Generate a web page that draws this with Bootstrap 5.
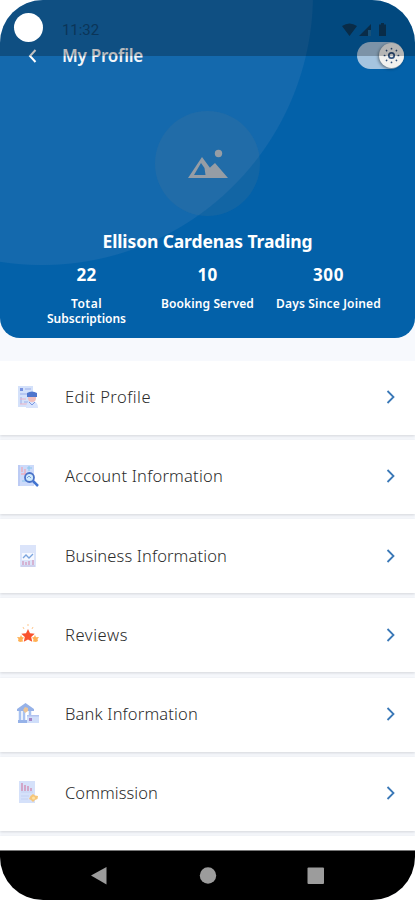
<!DOCTYPE html>
<html lang="en">
<head>
<meta charset="utf-8">
<meta name="viewport" content="width=device-width, initial-scale=1">
<title>My Profile</title>
<link href="https://cdn.jsdelivr.net/npm/bootstrap@5.3.0/dist/css/bootstrap.min.css" rel="stylesheet">
<style>
body{background:#fff;font-family:"Noto Sans","Open Sans",sans-serif;overflow:hidden}
.phone{width:415px;height:900px;border-radius:43px;background:#f7f9fd}
.hero{height:338px;border-radius:0 0 20px 20px;background:radial-gradient(circle at 42px -6px,#1469ad 270.5px,#0361a9 271.5px);color:#fff}
.topbar{height:76px;padding:35px 11px 0 27px}
.page-title{font-size:17px;font-weight:600;line-height:20px;margin-left:23px;color:#f3f6fa}
.toggle{width:47px;height:27px;border-radius:14px;background:#a5c4df}
.knob{width:25px;height:25px;background:#f1f1ef;box-shadow:-1px 1px 3px #0006}
.avatar{width:105px;height:105px;margin-top:35px;background:#8080801f}
.company{font-size:17.5px;font-weight:700;line-height:24px;margin-top:13px}
.stats{margin-top:10px;padding:0 26px}
.stat-num{font-size:17px;font-weight:700;line-height:24px}
.stat-label{font-size:12px;font-weight:600;line-height:15px;margin-top:9px}
.stat-label span{display:inline-block;height:15px;vertical-align:top}
.menu{margin-top:22.500px;gap:5.300px}
.menu-row{height:74px;padding:0 19px 1px 17px;box-shadow:0 1px 3px #3a3f4533;color:#2b2b2b}
.menu-row > svg:first-child{opacity:.88}
.menu-label{font-size:16.5px;font-weight:300;margin-left:26px;line-height:24px}
.softkeys{height:50px;border-top:1px solid #777}
.status{height:56px;background:#0000003f;pointer-events:none}
.camera{width:29px;height:29px;left:14px;top:13px}
.clock{font-family:Roboto,sans-serif;font-size:15px;line-height:18px;left:62px;top:21px;color:#0b3558}
.signals{left:341px;top:22px}
</style>
<script src="https://cdn.jsdelivr.net/npm/bootstrap@5.3.0/dist/js/bootstrap.bundle.min.js"></script>
</head>
<body>
<main class="phone position-relative overflow-hidden d-flex flex-column">
  <header class="hero flex-shrink-0 d-flex flex-column align-items-center">
    <div class="topbar w-100 d-flex align-items-center">
      <svg width="12" height="16" viewBox="0 0 12 16" fill="none" stroke="#fff" stroke-width="2"><path d="M8.500 2 3 8l5.500 6"/></svg>
      <h1 class="page-title mb-0"><span data-w="81">My Profile</span></h1>
      <div class="toggle ms-auto d-flex align-items-center justify-content-end">
        <div class="knob rounded-circle d-flex align-items-center justify-content-center">
          <svg width="19" height="19" viewBox="-9.5 -9.5 19 19" fill="none" stroke="#30507c" stroke-width="1.7" stroke-linecap="round"><circle r="2.7"/><path d="M0-7v.2M0 7v-.2M-7 0h.2M7 0h-.2M-5-5l.1.1M5-5l-.1.1M-5 5l.1-.1M5 5l-.1-.1"/></svg>
        </div>
      </div>
    </div>
    <div class="avatar rounded-circle d-flex align-items-center justify-content-center">
      <svg width="42" height="30" viewBox="0 0 42 30" fill="#969da5"><path fill-rule="evenodd" d="M1 29 15 8l8.500 11.500-.5-1L28 14l13 15ZM7 26h11.500l-1-7-3.500-5Z"/><circle cx="31.500" cy="4.500" r="3.700"/></svg>
    </div>
    <div class="company"><span data-w="210">Ellison Cardenas Trading</span></div>
    <div class="stats row g-0 w-100 text-center">
      <div class="col-4"><div class="stat-num"><span data-w="20">22</span></div><div class="stat-label"><span data-w="31">Total</span><br><span data-w="79">Subscriptions</span></div></div>
      <div class="col-4"><div class="stat-num"><span data-w="20">10</span></div><div class="stat-label text-nowrap"><span data-w="93">Booking Served</span></div></div>
      <div class="col-4"><div class="stat-num"><span data-w="31">300</span></div><div class="stat-label text-nowrap"><span data-w="105">Days Since Joined</span></div></div>
    </div>
  </header>

  <nav class="menu flex-grow-1 overflow-hidden d-flex flex-column">
    <a class="menu-row flex-shrink-0 bg-white d-flex align-items-center text-decoration-none" href="#">
      <svg width="22" height="24" viewBox="0 0 22 24" fill="none"><path fill="#cfddfa" d="M1 1h15v21H1z"/><path fill="#6482dc" d="M3 3h3v3H3z"/><path stroke="#8da4e7" d="M8 4h6M3 9h9M4 12v7M7 17h4"/><path stroke="#e9aabd" d="M3 14h6M3 19h7"/><path fill="#d3e0fc" d="M9 23c0-6 3-7 6-7s6 2 6 7z"/><circle cx="15" cy="13" r="4" fill="#efb7b6"/><path fill="#3764c6" d="M10 8q5-3 10 0v4H10z"/><path stroke="#688be0" d="m12 17 3 3 3-3"/></svg>
      <span class="menu-label"><span data-w="86">Edit Profile</span></span>
      <svg class="ms-auto" width="10" height="16" viewBox="0 0 10 16" fill="none" stroke="#3a78b7" stroke-width="1.800"><path d="m1.500 2 6 6-6 6"/></svg>
    </a>
    <a class="menu-row flex-shrink-0 bg-white d-flex align-items-center text-decoration-none" href="#">
      <svg width="22" height="24" viewBox="0 0 22 24"><path fill="#c5d5fa" d="M1 1h16v21H1z"/><path fill="#b3c4f3" d="M1 1h2v21H1z"/><path stroke="#e9a5b8" stroke-width="1.500" d="M5 3v5M8 5v6M4 10h5"/><path stroke="#79c0eb" d="M10 4h5M12 2v5M5 17h5"/><circle cx="12.500" cy="13.500" r="4.500" fill="#c9e6fb" stroke="#315fc1" stroke-width="1.800"/><path stroke="#2861ca" stroke-width="2.500" d="m16 17 5 5"/><path fill="none" stroke="#6490d6" d="m10 14 2-2 2 2"/></svg>
      <span class="menu-label"><span data-w="158">Account Information</span></span>
      <svg class="ms-auto" width="10" height="16" viewBox="0 0 10 16" fill="none" stroke="#3a78b7" stroke-width="1.800"><path d="m1.500 2 6 6-6 6"/></svg>
    </a>
    <a class="menu-row flex-shrink-0 bg-white d-flex align-items-center text-decoration-none" href="#">
      <svg width="22" height="24" viewBox="0 0 22 24"><path fill="#d7e1fa" d="M3 1h16v22H3z"/><path fill="#f5f8ff" d="M5 9h12v7H5z"/><path fill="none" stroke="#6898d9" stroke-width="1.300" d="m6 14 3-3 3 3 4-4"/><path stroke="#cf9fc4" stroke-width="1.700" d="M6 17v4M9 18v3M12 17v4M16 16v5"/><path stroke="#b7b6de" d="M4 22h14"/></svg>
      <span class="menu-label"><span data-w="162">Business Information</span></span>
      <svg class="ms-auto" width="10" height="16" viewBox="0 0 10 16" fill="none" stroke="#3a78b7" stroke-width="1.800"><path d="m1.500 2 6 6-6 6"/></svg>
    </a>
    <a class="menu-row flex-shrink-0 bg-white d-flex align-items-center text-decoration-none" href="#">
      <svg width="22" height="24" viewBox="0 0 22 24"><path fill="#ffa63c" d="m4 12 1 2 2 .5-1.500 2 .5 2-3 .5-2-1 .5-2L0 14l3 .2ZM18 12l-1 2-2 .5 1.500 2-.5 2 3 .5 2-1-.5-2L22 14l-3 .2Z"/><path fill="#f93a10" d="m11 6 2 4.300 4.700.5-3.500 3.200 1 4.800L11 16.400l-4.200 2.400 1-4.800-3.500-3.200 4.700-.5Z"/><path stroke="#ffc180" d="M11 1v2M6 4l1 2M16 4l-1 2"/></svg>
      <span class="menu-label"><span data-w="63">Reviews</span></span>
      <svg class="ms-auto" width="10" height="16" viewBox="0 0 10 16" fill="none" stroke="#3a78b7" stroke-width="1.800"><path d="m1.500 2 6 6-6 6"/></svg>
    </a>
    <a class="menu-row flex-shrink-0 bg-white d-flex align-items-center text-decoration-none" href="#">
      <svg width="22" height="24" viewBox="0 0 22 24"><path fill="#88a8e5" d="M0 7 8.500 1 17 7v2H0zM1 18h14v3H1z"/><path stroke="#9dbaf0" stroke-width="2.500" d="M3 9v9M7 9v9M13 9v9"/><path fill="#e9bd8a" d="m8 5 3 1v3l-3 2-2-3z"/><path fill="#c9dafa" d="M10 13h12v8H10z"/><path fill="#a9bdee" d="M10 13h12v1.500H10z"/><path fill="#9873bd" d="M12 16h3v3h-3z"/></svg>
      <span class="menu-label"><span data-w="133">Bank Information</span></span>
      <svg class="ms-auto" width="10" height="16" viewBox="0 0 10 16" fill="none" stroke="#3a78b7" stroke-width="1.800"><path d="m1.500 2 6 6-6 6"/></svg>
    </a>
    <a class="menu-row flex-shrink-0 bg-white d-flex align-items-center text-decoration-none" href="#">
      <svg width="22" height="24" viewBox="0 0 22 24"><path fill="#d0ddfa" d="M2 0h16v22H2z"/><path stroke="#cc8fb7" stroke-width="1.700" d="M5 2v8M8 4v6M11 5v5M14 7v3"/><path stroke="#bccbf0" d="M4 11h12M4 15h8M4 18h7"/><path fill="#f5bf68" d="m16 13 2 1.500 3 .5-.5 3-2.500 1-2 2-2-2-2-1 1.500-3Z"/><circle cx="16.500" cy="17" r="1.500" fill="#ffdf97"/></svg>
      <span class="menu-label"><span data-w="93">Commission</span></span>
      <svg class="ms-auto" width="10" height="16" viewBox="0 0 10 16" fill="none" stroke="#3a78b7" stroke-width="1.800"><path d="m1.500 2 6 6-6 6"/></svg>
    </a>
    <div class="menu-row flex-shrink-0 bg-white"></div>
  </nav>

  <footer class="softkeys flex-shrink-0 bg-black">
    <svg class="d-block" width="415" height="49" fill="#9c9c9c"><path d="M91 24.500 106.500 16v17.500Z"/><circle cx="208" cy="24.500" r="8.200"/><rect x="307.500" y="16.500" width="16.500" height="16.500" rx="1"/></svg>
  </footer>

  <div class="status position-absolute top-0 start-0 w-100">
    <div class="camera position-absolute bg-white rounded-circle"></div>
    <div class="clock position-absolute"><span data-w="37">11:32</span></div>
    <svg class="signals position-absolute" width="50" height="16" viewBox="0 0 50 16" fill="#092c48"><path d="M1 4q7.500-5 15 0L8.500 14ZM30 2v12H18Z"/><path fill="#165078" d="M27 8h3v6h-3z"/><path d="M38 2.500h2V1h3v1.500h2V14h-7z"/></svg>
  </div>
</main>
<script>
// Track each label to its design width.
document.querySelectorAll('[data-w]').forEach(function (el) {
  var gap = (Number(el.dataset.w) - el.getBoundingClientRect().width) / el.textContent.length;
  el.style.letterSpacing = gap.toFixed(3) + 'px';
});
</script>
</body>
</html>
